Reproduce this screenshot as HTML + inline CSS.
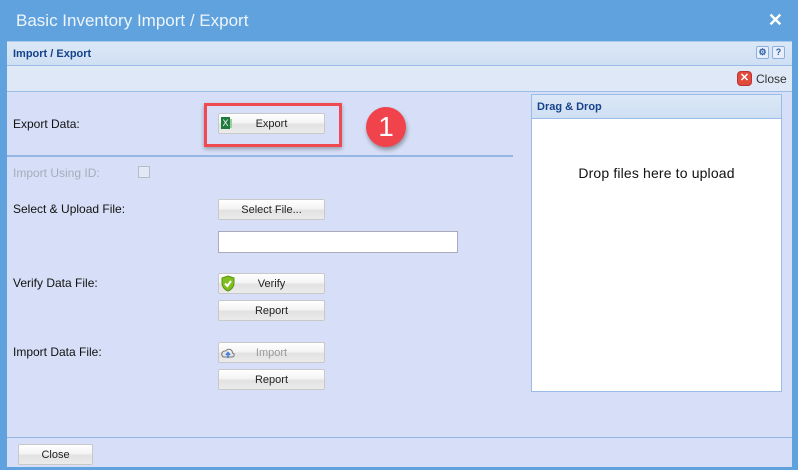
<!DOCTYPE html>
<html><head><style>
*{box-sizing:border-box;margin:0;padding:0}
body{width:798px;height:470px;background:#5fa2dd;font-family:"Liberation Sans",Arial,sans-serif;position:relative;overflow:hidden}
.abs{position:absolute}
.title{left:16px;top:11px;font-size:17px;color:#eef5fc}
.x{right:15px;top:10px;color:#fff;font-size:18px;font-weight:bold}
.panel{left:7px;top:41px;width:785px;height:426px;background:#d6dff7}
.hdr{left:0;top:0;width:785px;height:25px;background:linear-gradient(#dce8f6,#cfdff3);border-top:1px solid #a8c8ec;border-bottom:1px solid #99bde6;font-size:11px;font-weight:bold;color:#15428b;padding:6px 6px}
.tb{left:0;top:25px;width:785px;height:26px;background:#dfe8f6;border-bottom:1px solid #99bde6}
.lbl{font-size:12px;color:#111}
.btn{width:107px;height:21px;border:1px solid #c8c8c8;border-radius:2px;background:linear-gradient(#fff 0,#f4f4f4 45%,#e2e2e2 55%,#ebebeb);font-size:11px;color:#222;text-align:center;line-height:21px}
.sq{width:13px;height:13px;border:1px solid #8cb0dd;background:#e8eefa;border-radius:2px;font-size:9px;text-align:center;line-height:11px;color:#2a5fa8;font-weight:bold}
</style></head><body>
<div class="abs title">Basic Inventory Import / Export</div>
<div class="abs x">✕</div>
<div class="abs panel">
 <div class="abs hdr">Import / Export</div>
 <div class="abs sq" style="left:749px;top:5px">⚙</div>
 <div class="abs sq" style="left:765px;top:5px">?</div>
 <div class="abs tb"></div>
 <div class="abs" style="left:730px;top:30px;width:15px;height:15px;border-radius:4px;background:#e24a3b;border:1px solid #b33;color:#fff;font-size:11px;font-weight:bold;text-align:center;line-height:13px">✕</div>
 <div class="abs lbl" style="left:749px;top:31px;color:#333">Close</div>

 <div class="abs lbl" style="left:6px;top:76px">Export Data:</div>
 <div class="abs lbl" style="left:6px;top:125px;color:#a5acbb">Import Using ID:</div>
 <div class="abs" style="left:131px;top:125px;width:12px;height:12px;border:1px solid #b5bccb;background:#e3e8f4"></div>
 <div class="abs lbl" style="left:6px;top:161px">Select &amp; Upload File:</div>
 <div class="abs lbl" style="left:6px;top:235px">Verify Data File:</div>
 <div class="abs lbl" style="left:6px;top:304px">Import Data File:</div>
 <div class="abs" style="left:0;top:114px;width:506px;height:2px;background:#94b6e2"></div>

 <div class="abs btn" style="left:211px;top:72px">Export</div>
 <div class="abs" style="left:214px;top:76px;width:9px;height:12px;background:#1f7a3d;color:#fff;font-size:9px;line-height:12px;text-align:center">X</div>
 <div class="abs" style="left:223px;top:78px;width:4px;height:9px;border-left:2px solid #9ccf9f"></div>
 <div class="abs" style="left:197px;top:62px;width:138px;height:44px;border:3px solid #ef4a52;box-shadow:0 2px 4px rgba(0,0,0,.3)"></div>
 <div class="abs" style="left:359px;top:66px;width:40px;height:40px;border-radius:50%;background:#f0434c;box-shadow:1px 3px 4px rgba(0,0,0,.35);color:#fff;font-size:28px;text-align:center;line-height:40px">1</div>

 <div class="abs btn" style="left:211px;top:158px">Select File...</div>
 <div class="abs" style="left:211px;top:190px;width:240px;height:22px;border:1px solid #aab;background:#fff"></div>
 <div class="abs btn" style="left:211px;top:232px">Verify</div>
 <svg class="abs" style="left:213px;top:234px" width="16" height="17" viewBox="0 0 16 17"><path d="M8 1L14 3V8C14 12 11 15 8 16C5 15 2 12 2 8V3Z" fill="#7fbf1f" stroke="#5a9412"/><path d="M5 8.5L7.3 11L11 6" stroke="#fff" stroke-width="2" fill="none"/></svg>
 <div class="abs btn" style="left:211px;top:259px">Report</div>
 <div class="abs btn" style="left:211px;top:301px;color:#999">Import</div>
 <svg class="abs" style="left:213px;top:305px" width="16" height="13" viewBox="0 0 16 13"><path d="M4 11H12C14.5 11 15 7.5 12.5 7C12.5 3 7 2 6 5C3 4.5 1 7 2 9.5C2.5 10.5 3 11 4 11Z" fill="none" stroke="#777"/><path d="M8 12V7M6 9L8 6.5L10 9" stroke="#4a7fe0" stroke-width="1.6" fill="none"/></svg>
 <div class="abs btn" style="left:211px;top:328px">Report</div>

 <div class="abs" style="left:524px;top:53px;width:251px;height:298px;border:1px solid #99bde6;background:#fff">
  <div style="height:24px;background:linear-gradient(#dce8f6,#cfdff3);border-bottom:1px solid #99bde6;font-size:11px;font-weight:bold;color:#15428b;padding:6px 5px">Drag &amp; Drop</div>
  <div style="text-align:center;font-size:14px;color:#111;margin-top:46px;letter-spacing:0.15px">Drop files here to upload</div>
 </div>
 <div class="abs" style="left:0;top:396px;width:785px;height:1px;background:#94b6e2"></div>
 <div class="abs btn" style="left:11px;top:403px;width:75px">Close</div>
</div>
</body></html>
